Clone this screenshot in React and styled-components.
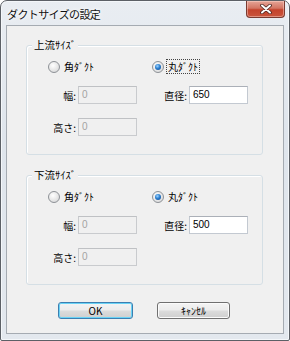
import React from 'react'
import styled, { createGlobalStyle } from 'styled-components'

const GlobalStyle = createGlobalStyle`
  html, body {
    margin: 0;
    padding: 0;
    background: #ffffff;
  }
  body {
    font-family: "Noto Sans CJK JP", "Noto Sans", sans-serif;
  }
`

const Window = styled.div`
  box-sizing: border-box;
  width: 290px;
  height: 341px;
  border: 1px solid #5c6066;
  border-radius: 7px 7px 2px 2px;
  background: linear-gradient(180deg, #e9edf2 0%, #dfe5ec 40%, #e3e8ee 100%);
  box-shadow: inset 0 0 0 1px #f4f7fa;
  display: flex;
  flex-direction: column;
`

const TitleBar = styled.div`
  height: 24px;
  display: flex;
  align-items: flex-start;
  justify-content: space-between;
  padding-left: 6px;
`

const Title = styled.div`
  font-size: 11px;
  line-height: 11px;
  padding-top: 8px;
  color: #111;
  letter-spacing: -0.6px;
  text-shadow: 0 0 6px #ffffff, 0 0 3px #ffffff;
`

const CloseButton = styled.div`
  width: 39px;
  height: 17px;
  margin-right: 4px;
  box-sizing: border-box;
  border: 1px solid #7a3a30;
  border-top: none;
  border-radius: 0 0 4px 4px;
  background: linear-gradient(180deg, #e6a597 0%, #d37563 45%, #c4432c 55%, #c9553c 100%);
  box-shadow: inset 0 0 0 1px rgba(255, 220, 210, 0.45);
  display: flex;
  align-items: center;
  justify-content: center;
`

const Client = styled.div`
  flex: 1;
  margin: 0 5px 6px 5px;
  border: 1px solid #a5abb2;
  background: #f0f0f0;
  padding: 19px 0 0 19px;
  display: flex;
  flex-direction: column;
`

const GroupBox = styled.div`
  position: relative;
  width: 237px;
  box-sizing: border-box;
  border: 1px solid #d5dfe5;
  border-radius: 3px;
  box-shadow: inset 1px 1px 0 #ffffff;
  padding: 14px 0 18px 21px;
  margin-bottom: ${p => p.$gap || 0}px;
  display: flex;
  flex-direction: column;
`

const Caption = styled.span`
  position: absolute;
  top: -8px;
  left: 5px;
  padding: 0 2px;
  background: #f0f0f0;
  font-size: 10.5px;
  line-height: 14px;
  color: #000;
`

const Row = styled.div`
  display: flex;
  align-items: center;
  height: ${p => p.$h}px;
  margin-bottom: ${p => p.$mb || 0}px;
`

const Cell = styled.div`
  width: 104px;
  display: flex;
  align-items: center;
`

const RadioWrap = styled.label`
  display: flex;
  align-items: center;
  gap: 2px;
  font-size: 10px;
  line-height: 13px;
  color: #000;
`

const RadioDot = styled.span`
  position: relative;
  width: 10px;
  height: 10px;
  border-radius: 50%;
  border: 1px solid #8e9297;
  background: radial-gradient(circle at 40% 35%, #ffffff 0%, #e6e6e6 55%, #cfd1d4 100%);
  box-sizing: content-box;

  &::after {
    content: "";
    display: ${p => (p.$checked ? 'block' : 'none')};
    position: absolute;
    left: 2px;
    top: 2px;
    width: 6px;
    height: 6px;
    border-radius: 50%;
    background: radial-gradient(circle at 40% 35%, #9fd4ff 0%, #2a7fd0 45%, #0c3f85 100%);
  }
`

const RadioText = styled.span`
  padding: 0 1px;
  border: 1px ${p => (p.$focus ? 'dotted #444' : 'solid transparent')};
`

const FieldLabel = styled.span`
  width: ${p => p.$w}px;
  text-align: right;
  font-size: 10px;
  color: #000;
  margin-right: 2px;
  white-space: nowrap;
`

const TextBox = styled.div`
  box-sizing: border-box;
  width: 59px;
  height: 18px;
  border: 1px solid ${p => (p.$disabled ? '#c9cbce' : '#c3c9d1')};
  border-top-color: ${p => (p.$disabled ? '#bfc1c4' : '#abb0b8')};
  background: ${p => (p.$disabled ? '#f0f0f0' : '#ffffff')};
  color: ${p => (p.$disabled ? '#a3a3a3' : '#000')};
  font-family: "Liberation Sans", Arial, sans-serif;
  font-size: 10px;
  line-height: 16px;
  padding-left: 3px;
`

const ButtonRow = styled.div`
  display: flex;
  gap: 24px;
  margin: 17px 0 0 32px;
`

const Button = styled.div`
  box-sizing: border-box;
  width: ${p => p.$w}px;
  height: 17px;
  border: 1px solid ${p => (p.$default ? '#3c7fb1' : '#707070')};
  border-radius: 3px;
  background: linear-gradient(180deg, #f4f4f4 0%, #ececec 48%, #dcdcdc 52%, #cfcfcf 100%);
  box-shadow: inset 0 0 0 1px ${p => (p.$default ? '#6ad3f6' : '#fbfbfb')};
  display: flex;
  align-items: center;
  justify-content: center;
  font-size: 10px;
  color: #000;
`

function Radio({ checked, focus, children }) {
  return (
    <RadioWrap>
      <RadioDot $checked={checked} />
      <RadioText $focus={focus}>{children}</RadioText>
    </RadioWrap>
  )
}

function Field({ label, labelWidth, value, disabled }) {
  return (
    <>
      <FieldLabel $w={labelWidth}>{label}</FieldLabel>
      <TextBox $disabled={disabled}>{value}</TextBox>
    </>
  )
}

function SizeGroup({ caption, diameter, focus, gap }) {
  return (
    <GroupBox $gap={gap}>
      <Caption>{caption}</Caption>
      <Row $h={13} $mb={13}>
        <Cell><Radio>角ﾀﾞｸﾄ</Radio></Cell>
        <Cell><Radio checked focus={focus}>丸ﾀﾞｸﾄ</Radio></Cell>
      </Row>
      <Row $h={18} $mb={14}>
        <Cell><Field label="幅:" labelWidth={28} value="0" disabled /></Cell>
        <Cell><Field label="直径:" labelWidth={35} value={diameter} /></Cell>
      </Row>
      <Row $h={18}>
        <Cell><Field label="高さ:" labelWidth={28} value="0" disabled /></Cell>
      </Row>
    </GroupBox>
  )
}

export default function App() {
  return (
    <>
      <GlobalStyle />
      <Window>
        <TitleBar>
          <Title>ダクトサイズの設定</Title>
          <CloseButton>
            <svg width="12" height="10" viewBox="0 0 12 10">
              <path d="M2 1.5 L10 8.5 M10 1.5 L2 8.5" stroke="#4a2420" strokeWidth="3.6" strokeLinecap="round" />
              <path d="M2 1.5 L10 8.5 M10 1.5 L2 8.5" stroke="#ffffff" strokeWidth="2" strokeLinecap="round" />
            </svg>
          </CloseButton>
        </TitleBar>
        <Client>
          <SizeGroup caption="上流ｻｲｽﾞ" diameter="650" focus gap={20} />
          <SizeGroup caption="下流ｻｲｽﾞ" diameter="500" />
          <ButtonRow>
            <Button $w={75} $default>OK</Button>
            <Button $w={73}>ｷｬﾝｾﾙ</Button>
          </ButtonRow>
        </Client>
      </Window>
    </>
  )
}
